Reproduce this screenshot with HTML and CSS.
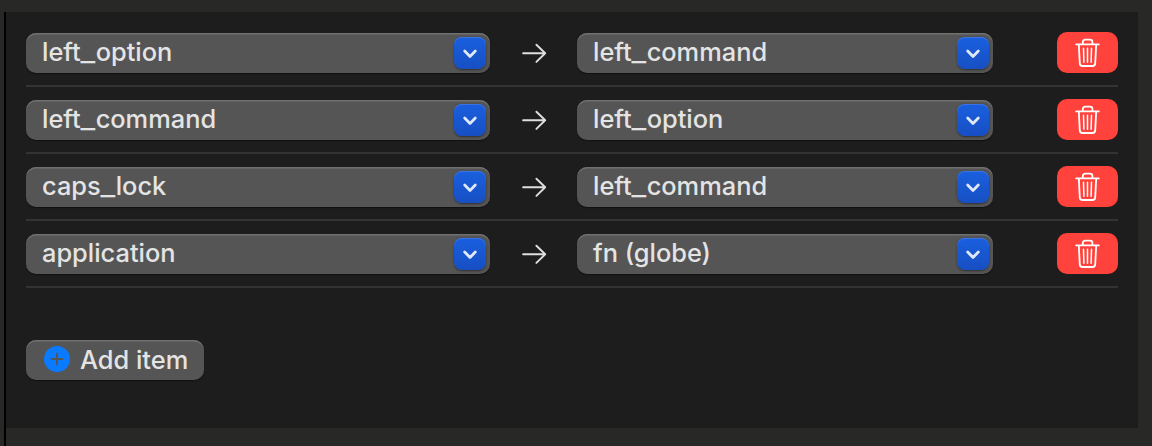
FILE: index.html
```html
<!DOCTYPE html>
<html lang="en">
<head>
<meta charset="utf-8">
<title>Simple Modifications</title>
<link rel="stylesheet" href="styles.css">
</head>
<body>
<svg class="symbols" width="0" height="0" aria-hidden="true">
  <symbol id="chevron" viewBox="0 0 32 32"><path d="M10.7 14.1 16 19.4l5.3-5.3" fill="none" stroke="#e0e8fa" stroke-width="2.8" stroke-linecap="round" stroke-linejoin="round"/></symbol>
  <symbol id="arrow" viewBox="0 0 26 22"><path d="M2.1 11.3H24.2M15.4 2.7l8.8 8.6-8.8 8.6" fill="none" stroke="#dedede" stroke-width="1.9" stroke-linecap="round" stroke-linejoin="round"/></symbol>
  <symbol id="trash" viewBox="0 0 25 29"><g fill="none" stroke="#fff" stroke-width="1.8" stroke-linecap="round" stroke-linejoin="round"><path d="M1.2 6.4h22.6M7.8 6.2V4.1q0-2.4 2.4-2.4h4.8q2.4 0 2.4 2.4v2.1M3.8 6.6l1 18.8q.1 2.6 2.7 2.6h10q2.6 0 2.7-2.6l1-18.8"/><path stroke-width="1.5" d="m8.5 10.3.4 14M12.5 10.3v14M16.5 10.3l-.4 14"/></g></symbol>
</svg>
<main class="panel">
  <div class="rows">
    <div class="row">
      <button class="select from"><span>left<i>_</i>option</span><span class="toggle"><svg><use href="#chevron"/></svg></span></button>
      <svg class="arrow"><use href="#arrow"/></svg>
      <button class="select to"><span>left<i>_</i>command</span><span class="toggle"><svg><use href="#chevron"/></svg></span></button>
      <button class="delete" aria-label="Delete"><svg><use href="#trash"/></svg></button>
    </div>
    <div class="row">
      <button class="select from"><span>left<i>_</i>command</span><span class="toggle"><svg><use href="#chevron"/></svg></span></button>
      <svg class="arrow"><use href="#arrow"/></svg>
      <button class="select to"><span>left<i>_</i>option</span><span class="toggle"><svg><use href="#chevron"/></svg></span></button>
      <button class="delete" aria-label="Delete"><svg><use href="#trash"/></svg></button>
    </div>
    <div class="row">
      <button class="select from"><span>caps<i>_</i>lock</span><span class="toggle"><svg><use href="#chevron"/></svg></span></button>
      <svg class="arrow"><use href="#arrow"/></svg>
      <button class="select to"><span>left<i>_</i>command</span><span class="toggle"><svg><use href="#chevron"/></svg></span></button>
      <button class="delete" aria-label="Delete"><svg><use href="#trash"/></svg></button>
    </div>
    <div class="row">
      <button class="select from"><span>application</span><span class="toggle"><svg><use href="#chevron"/></svg></span></button>
      <svg class="arrow"><use href="#arrow"/></svg>
      <button class="select to"><span>fn (globe)</span><span class="toggle"><svg><use href="#chevron"/></svg></span></button>
      <button class="delete" aria-label="Delete"><svg><use href="#trash"/></svg></button>
    </div>
  </div>
  <button class="add"><svg viewBox="0 0 26 26"><circle cx="13" cy="13" r="13" fill="#0a7aff"/><path d="M7.6 13h10.8M13 7.6v10.8" stroke="#555" stroke-width="1.9" stroke-linecap="round"/></svg><span>Add item</span></button>
</main>
</body>
</html>
```
FILE: styles.css
```css
* { box-sizing: border-box; }
body {
  margin: 0;
  height: 446px;
  padding: 12px 14px 0 4px;
  overflow: hidden;
  background: #282826;
  font-family: Inter, "Liberation Sans", sans-serif;
}
.symbols { position: absolute; }
.panel {
  height: 434px;
  padding: 8px 20px 0;
  border-left: 2px solid #000;
  background: linear-gradient(#1d1d1d, #1d1d1d) 0 0 / 100% 416px no-repeat;
}
button {
  margin: 0;
  border: 0;
  font: inherit;
  color: #e4e4e4;
}
.row {
  display: flex;
  align-items: center;
  height: 67px;
  border-bottom: 2px solid #333;
}
.select, .add {
  display: flex;
  align-items: center;
  height: 40px;
  border-radius: 10px;
  background: #555;
  box-shadow: inset 0 1.5px 0 #707070, 0 1px 1px #111;
  font-size: 25.4px;
  font-weight: 450;
  line-height: 36px;
  white-space: nowrap;
}
.select {
  justify-content: space-between;
  margin-top: 1px;
  padding: 0 4px 0 16px;
}
.select > span:first-child { margin-top: -3px; }
/* wider underscore between the words of a key name */
.select i {
  display: inline-block;
  margin: 0 1.6px;
  font-style: normal;
  transform: scaleX(1.25);
}
.from { width: 464px; }
.to { width: 416px; }
.toggle {
  width: 32px;
  height: 32px;
  border-radius: 8px;
  background: linear-gradient(#1a5fdf, #174fc2);
  box-shadow: inset 0 1px 0 #3974e2, 0 1px 2px #303030;
}
.toggle svg { display: block; width: 32px; height: 32px; }
.arrow { width: 26px; height: 22px; margin: 1px 30px 0 31px; }
.delete {
  display: flex;
  align-items: center;
  width: 61px;
  height: 41px;
  margin-left: auto;
  padding: 0 18px;
  border-radius: 10px;
  background: #ff423b;
}
.delete svg { width: 25px; height: 29px; }
.add {
  width: 178px;
  margin-top: 52px;
  padding: 0 0 0 18px;
}
.add svg { width: 26px; height: 26px; margin: -2px 10px 0 0; }
```
